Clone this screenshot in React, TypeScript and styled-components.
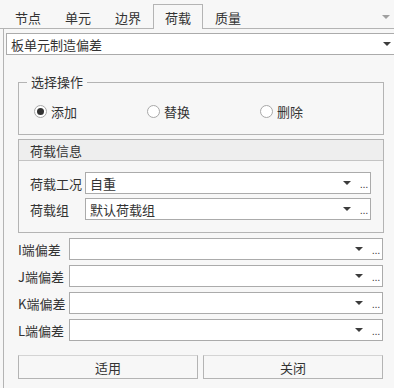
import styled, { createGlobalStyle } from "styled-components";

const Global = createGlobalStyle`
  html, body {
    margin: 0;
    padding: 0;
    background: #f7f7f7;
  }
  body {
    font-family: "Noto Sans CJK SC", "Noto Sans", sans-serif;
    font-size: 13px;
    color: #333;
  }
`;

const Page = styled.div`
  width: 394px;
  height: 388px;
  overflow: hidden;
  background: #f7f7f7;
`;

const TabStrip = styled.div`
  position: relative;
  display: flex;
  height: 24px;
  padding: 4px 0 0 3px;
  border-bottom: 1px solid #b4b4b4;
`;

const Tab = styled.div<{ $active?: boolean }>`
  width: 50px;
  height: ${(p) => (p.$active ? "25px" : "24px")};
  box-sizing: border-box;
  display: flex;
  align-items: center;
  justify-content: center;
  line-height: 1;
  color: #333;
  background: #f7f7f7;
  border: 1px solid ${(p) => (p.$active ? "#b4b4b4" : "transparent")};
  border-bottom: none;
  margin-bottom: -1px;
  padding-top: 1px;
`;

const ScrollArrow = styled.div`
  position: absolute;
  right: 4px;
  top: 15px;
  width: 0;
  height: 0;
  border-left: 4px solid transparent;
  border-right: 4px solid transparent;
  border-top: 4px solid #a0a0a0;
`;

const Body = styled.div`
  margin-left: 3px;
  border-left: 1px solid #b4b4b4;
  height: 360px;
  padding-top: 4px;
`;

const Combo = styled.div<{ $wide?: boolean }>`
  flex: 1;
  height: 22px;
  box-sizing: border-box;
  display: flex;
  align-items: center;
  background: #fff;
  border: 1px solid #ababab;
  padding-left: 4px;
  line-height: 1;
  ${(p) => p.$wide && "width: 392px; margin-left: 2px;"}
`;

const ComboText = styled.span`
  flex: 1;
`;

const Arrow = styled.span`
  width: 0;
  height: 0;
  border-left: 4px solid transparent;
  border-right: 4px solid transparent;
  border-top: 4px solid #3c3c3c;
  margin-right: 6px;
`;

const Dots = styled.span`
  font-family: "Liberation Sans", sans-serif;
  font-size: 11px;
  letter-spacing: -0.3px;
  color: #444;
  margin: 3px 2px 0 3px;
`;

const Inner = styled.div`
  padding: 0 10px 0 14px;
`;

const GroupBox = styled.fieldset`
  margin: 20px 0 0 0;
  padding: 0;
  height: 60px;
  box-sizing: border-box;
  border: 1px solid #b4b4b4;
  display: flex;
  flex-direction: row;
`;

const Legend = styled.legend`
  margin-left: 8px;
  padding: 0 4px;
  line-height: 14px;
`;

const RadioRow = styled.div`
  display: flex;
  width: 100%;
  padding-top: 15px;
`;

const RadioItem = styled.label`
  display: flex;
  align-items: center;
  gap: 4px;
  line-height: 1;
  height: 14px;
  width: 113px;
  padding-left: 15px;
  &:not(:first-child) {
    padding-left: 0;
  }
`;

const RadioCircle = styled.span<{ $checked?: boolean }>`
  width: 13px;
  height: 13px;
  box-sizing: border-box;
  border-radius: 50%;
  border: 1px solid #a8a8a8;
  background: #fff;
  display: flex;
  align-items: center;
  justify-content: center;
  &::after {
    content: "";
    display: ${(p) => (p.$checked ? "block" : "none")};
    width: 7px;
    height: 7px;
    border-radius: 50%;
    background: #333;
  }
`;

const InfoBox = styled.div`
  margin-top: 4px;
  border: 1px solid #b4b4b4;
  height: 94px;
  box-sizing: border-box;
`;

const InfoHeader = styled.div`
  height: 20px;
  background: #eeeeee;
  border-bottom: 1px solid #c4c4c4;
  display: flex;
  align-items: center;
  padding-left: 11px;
  line-height: 1;
`;

const InfoRows = styled.div`
  display: flex;
  flex-direction: column;
  gap: 4px;
  padding: 11px 12px 0 11px;
`;

const Row = styled.div<{ $label: number }>`
  display: flex;
  align-items: center;
  height: 22px;
  & > label {
    width: ${(p) => p.$label}px;
    flex-shrink: 0;
    line-height: 1;
    white-space: nowrap;
  }
`;

const OffsetRows = styled.div`
  display: flex;
  flex-direction: column;
  gap: 5px;
  margin-top: 5px;
  padding-right: 1px;
`;

const Buttons = styled.div`
  display: flex;
  gap: 5px;
  margin-top: 14px;
  padding-right: 1px;
`;

const Button = styled.button`
  flex: 1;
  height: 24px;
  background: #f7f7f7;
  border: 1px solid #b4b4b4;
  border-top-color: #d4d4d4;
  font-family: inherit;
  font-size: 13px;
  color: #333;
  line-height: 1;
  padding: 0;
`;

function Field({ label, value, width, dots = true }: { label: string; value?: string; width: number; dots?: boolean }) {
  return (
    <Row $label={width}>
      <label>{label}</label>
      <Combo>
        <ComboText>{value}</ComboText>
        <Arrow />
        {dots && <Dots>...</Dots>}
      </Combo>
    </Row>
  );
}

export default function App() {
  const tabs = ["节点", "单元", "边界", "荷载", "质量"];
  return (
    <Page>
      <Global />
      <TabStrip>
        {tabs.map((t) => (
          <Tab key={t} $active={t === "荷载"}>
            {t}
          </Tab>
        ))}
        <ScrollArrow />
      </TabStrip>
      <Body>
        <Combo $wide>
          <ComboText>板单元制造偏差</ComboText>
          <Arrow />
        </Combo>
        <Inner>
          <GroupBox>
            <Legend>选择操作</Legend>
            <RadioRow>
              <RadioItem>
                <RadioCircle $checked />
                添加
              </RadioItem>
              <RadioItem>
                <RadioCircle />
                替换
              </RadioItem>
              <RadioItem>
                <RadioCircle />
                删除
              </RadioItem>
            </RadioRow>
          </GroupBox>
          <InfoBox>
            <InfoHeader>荷载信息</InfoHeader>
            <InfoRows>
              <Field label="荷载工况" value="自重" width={55} />
              <Field label="荷载组" value="默认荷载组" width={55} />
            </InfoRows>
          </InfoBox>
          <OffsetRows>
            {["I端偏差", "J端偏差", "K端偏差", "L端偏差"].map((l) => (
              <Field key={l} label={l} width={51} />
            ))}
          </OffsetRows>
          <Buttons>
            <Button>适用</Button>
            <Button>关闭</Button>
          </Buttons>
        </Inner>
      </Body>
    </Page>
  );
}
